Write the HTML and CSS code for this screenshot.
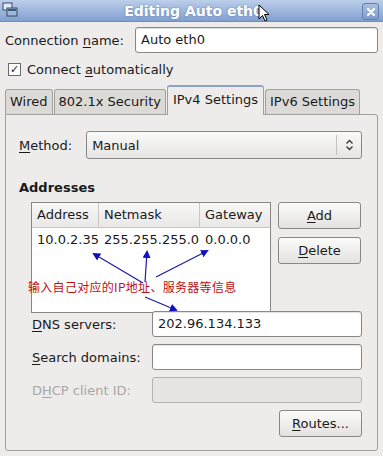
FILE: index.html
```html
<!DOCTYPE html>
<html lang="en">
<head>
    <meta charset="UTF-8">
    <title>Editing Auto eth0</title>
    <link rel="stylesheet" href="styles.css">
</head>
<body>
    <div class="titlebar">
        <svg class="win-icon" width="16" height="16" viewBox="0 0 16 16">
            <rect x="1" y="1" width="9" height="7" fill="#dfe8f5" stroke="#3a4a60"/>
            <rect x="5" y="6" width="10" height="8" fill="#9fb8d8" stroke="#3a4a60"/>
            <rect x="6" y="7" width="8" height="2" fill="#3a5a8a"/>
        </svg>
        <span class="title">Editing Auto eth0</span>
        <svg class="cursor" width="14" height="20" viewBox="0 0 14 20">
            <path d="M1 1 L1 15 L4.5 11.5 L7 17 L9 16 L6.5 10.5 L11 10.5 Z" fill="#fff" stroke="#000" stroke-width="1"/>
        </svg>
        <div class="close">
            <svg width="10" height="10" viewBox="0 0 10 10">
                <path d="M2 2 L8 8 M8 2 L2 8" stroke="#fff" stroke-width="2.2" stroke-linecap="round"/>
            </svg>
        </div>
    </div>

    <div class="content">
        <div class="row name-row">
            <label class="lbl">Connection <u>n</u>ame:</label>
            <div class="entry">Auto eth0</div>
        </div>
        <div class="check-row">
            <span class="checkbox">&#10003;</span>
            <span>Connect <u>a</u>utomatically</span>
        </div>

        <div class="tabs">
            <div class="tab">Wired</div>
            <div class="tab">802.1x Security</div>
            <div class="tab active">IPv4 Settings</div>
            <div class="tab">IPv6 Settings</div>
        </div>

        <div class="panel">
            <div class="method-row">
                <label class="lbl"><u>M</u>ethod:</label>
                <div class="combo">
                    <span>Manual</span>
                    <span class="combo-arrow">
                        <svg width="9" height="12" viewBox="0 0 9 12">
                            <path d="M1.5 4.5 L4.5 1.5 L7.5 4.5 M1.5 7.5 L4.5 10.5 L7.5 7.5" fill="none" stroke="#333" stroke-width="1.3"/>
                        </svg>
                    </span>
                </div>
            </div>

            <div class="section-title">Addresses</div>

            <div class="addr-area">
                <div class="table">
                    <div class="thead">
                        <div class="th col-a">Address</div>
                        <div class="th col-n">Netmask</div>
                        <div class="th col-g">Gateway</div>
                    </div>
                    <div class="tr">
                        <div class="td col-a">10.0.2.35</div>
                        <div class="td col-n">255.255.255.0</div>
                        <div class="td col-g">0.0.0.0</div>
                    </div>
                </div>
                <div class="side-buttons">
                    <div class="button"><u>A</u>dd</div>
                    <div class="button"><u>D</u>elete</div>
                </div>
            </div>

            <div class="form">
                <div class="form-row">
                    <label class="lbl"><u>D</u>NS servers:</label>
                    <div class="entry">202.96.134.133</div>
                </div>
                <div class="form-row">
                    <label class="lbl"><u>S</u>earch domains:</label>
                    <div class="entry"></div>
                </div>
                <div class="form-row disabled">
                    <label class="lbl">D<u>H</u>CP client ID:</label>
                    <div class="entry"></div>
                </div>
            </div>

            <div class="routes-row">
                <div class="button"><u>R</u>outes...</div>
            </div>

            <!-- пометка поверх скриншота -->
            <div class="note">输入自己对应的IP地址、服务器等信息</div>
            <svg class="arrows" width="383" height="456" viewBox="0 0 383 456">
                <defs>
                    <marker id="head" markerWidth="8" markerHeight="8" refX="6" refY="4" orient="auto" markerUnits="userSpaceOnUse">
                        <path d="M0 0 L8 4 L0 8 Z" fill="#1010c0"/>
                    </marker>
                </defs>
                <g stroke="#1a1aa8" stroke-width="1.2" fill="none">
                    <line x1="143" y1="283" x2="94" y2="254" marker-end="url(#head)"/>
                    <line x1="145" y1="282" x2="147" y2="252" marker-end="url(#head)"/>
                    <line x1="156" y1="277" x2="207" y2="251" marker-end="url(#head)"/>
                    <line x1="145" y1="297" x2="176" y2="310" marker-end="url(#head)"/>
                </g>
            </svg>
        </div>
    </div>
</body>
</html>
```

FILE: styles.css
```css
body {
    margin: 0;
    width: 383px;
    height: 456px;
    overflow: hidden;
    background: #edeceb;
    font-family: "DejaVu Sans", sans-serif;
    font-size: 13px;
    color: #1a1a1a;
    position: relative;
}
u {
    text-decoration: underline;
    text-underline-offset: 2px;
}
.titlebar {
    height: 21px;
    background: linear-gradient(#bccfeb, #819fcf);
    border-bottom: 1px solid #6f8cbc;
    display: flex;
    align-items: center;
    justify-content: center;
    position: relative;
}
.win-icon {
    position: absolute;
    left: 2px;
    top: 2px;
}
.title {
    color: #fff;
    font-weight: bold;
    font-size: 14px;
    margin-left: 4px;
    text-shadow: 0 0 2px #5a78a8;
}
.cursor {
    position: absolute;
    left: 258px;
    top: 4px;
}
.close {
    position: absolute;
    right: 4px;
    top: 3px;
    width: 15px;
    height: 15px;
    border: 1px solid #5f7fae;
    border-radius: 3px;
    background: linear-gradient(#a9c0e2, #7f9ccb);
    display: flex;
    align-items: center;
    justify-content: center;
}
.content {
    padding: 0 5px 0 5px;
}
.row {
    display: flex;
    align-items: center;
}
.name-row {
    margin-top: 5px;
    justify-content: space-between;
}
.entry {
    height: 24px;
    line-height: 24px;
    background: #fff;
    border: 1px solid #8a8886;
    border-radius: 3px;
    padding: 0 5px;
    box-sizing: content-box;
    box-shadow: inset 0 1px 1px rgba(0, 0, 0, 0.12);
}
.name-row .entry {
    width: 231px;
}
.check-row {
    display: flex;
    align-items: center;
    margin-top: 6px;
    height: 21px;
    padding-left: 3px;
    gap: 6px;
}
.checkbox {
    width: 11px;
    height: 11px;
    border: 1px solid #6d6b68;
    background: #fff;
    font-size: 11px;
    line-height: 11px;
    text-align: center;
    color: #222;
}
.tabs {
    display: flex;
    align-items: flex-end;
    margin-top: 5px;
    height: 29px;
    position: relative;
    z-index: 2;
}
.tab {
    height: 24px;
    line-height: 24px;
    padding: 0 4px;
    white-space: nowrap;
    background: #dcdad6;
    border: 1px solid #a3a09b;
    border-bottom: none;
    border-radius: 3px 3px 0 0;
    margin-right: 1px;
}
.tab.active {
    height: 28px;
    line-height: 26px;
    padding: 0 5px;
    background: #edeceb;
    border-top: 2px solid #8aa4cc;
    position: relative;
    top: 1px;
}
.panel {
    height: 337px;
    border: 1px solid #a3a09b;
    border-radius: 0 3px 3px 3px;
    box-sizing: border-box;
    padding: 16px 15px 0 13px;
}
.method-row {
    display: flex;
    align-items: center;
    gap: 14px;
}
.combo {
    flex: 1;
    height: 26px;
    border: 1px solid #8a8886;
    border-radius: 3px;
    background: linear-gradient(#f9f9f8, #e6e5e3);
    display: flex;
    align-items: center;
    justify-content: space-between;
    padding-left: 5px;
}
.combo-arrow {
    width: 24px;
    height: 20px;
    border-left: 1px solid #c4c2bf;
    display: flex;
    align-items: center;
    justify-content: center;
}
.section-title {
    font-weight: bold;
    margin-top: 21px;
}
.addr-area {
    display: flex;
    margin-top: 7px;
    margin-left: 12px;
    gap: 7px;
}
.table {
    width: 238px;
    height: 109px;
    background: #fff;
    border: 1px solid #8a8886;
}
.thead {
    display: flex;
    height: 24px;
    line-height: 24px;
    background: linear-gradient(#f7f7f6, #e9e8e6);
    border-bottom: 1px solid #c8c6c2;
}
.th, .td {
    padding-left: 5px;
    box-sizing: border-box;
    white-space: nowrap;
}
.th.col-a, .th.col-n {
    border-right: 1px solid #cac8c4;
}
.col-a { width: 67px; }
.col-n { width: 101px; }
.col-g { width: 70px; }
.tr {
    display: flex;
    height: 24px;
    line-height: 24px;
}
.side-buttons {
    display: flex;
    flex-direction: column;
    gap: 8px;
}
.button {
    width: 81px;
    height: 25px;
    line-height: 25px;
    text-align: center;
    border: 1px solid #8a8886;
    border-radius: 3px;
    background: linear-gradient(#fbfbfa, #e3e2df);
}
.form {
    display: flex;
    flex-direction: column;
    gap: 7px;
    margin-top: -2px;
    margin-left: 13px;
}
.form-row {
    display: flex;
    align-items: center;
    justify-content: space-between;
}
.form-row .entry {
    width: 198px;
}
.form-row.disabled .lbl {
    color: #a9a7a4;
}
.form-row.disabled .entry {
    background: #e6e5e3;
    border-color: #b5b3af;
    box-shadow: none;
}
.routes-row {
    display: flex;
    justify-content: flex-end;
    margin-top: 7px;
}
.note {
    position: absolute;
    left: 28px;
    top: 278px;
    color: #c01010;
    font-family: "Noto Sans CJK SC", sans-serif;
    font-size: 12px;
    letter-spacing: 0.3px;
}
.arrows {
    position: absolute;
    left: 0;
    top: 0;
    pointer-events: none;
}
```
